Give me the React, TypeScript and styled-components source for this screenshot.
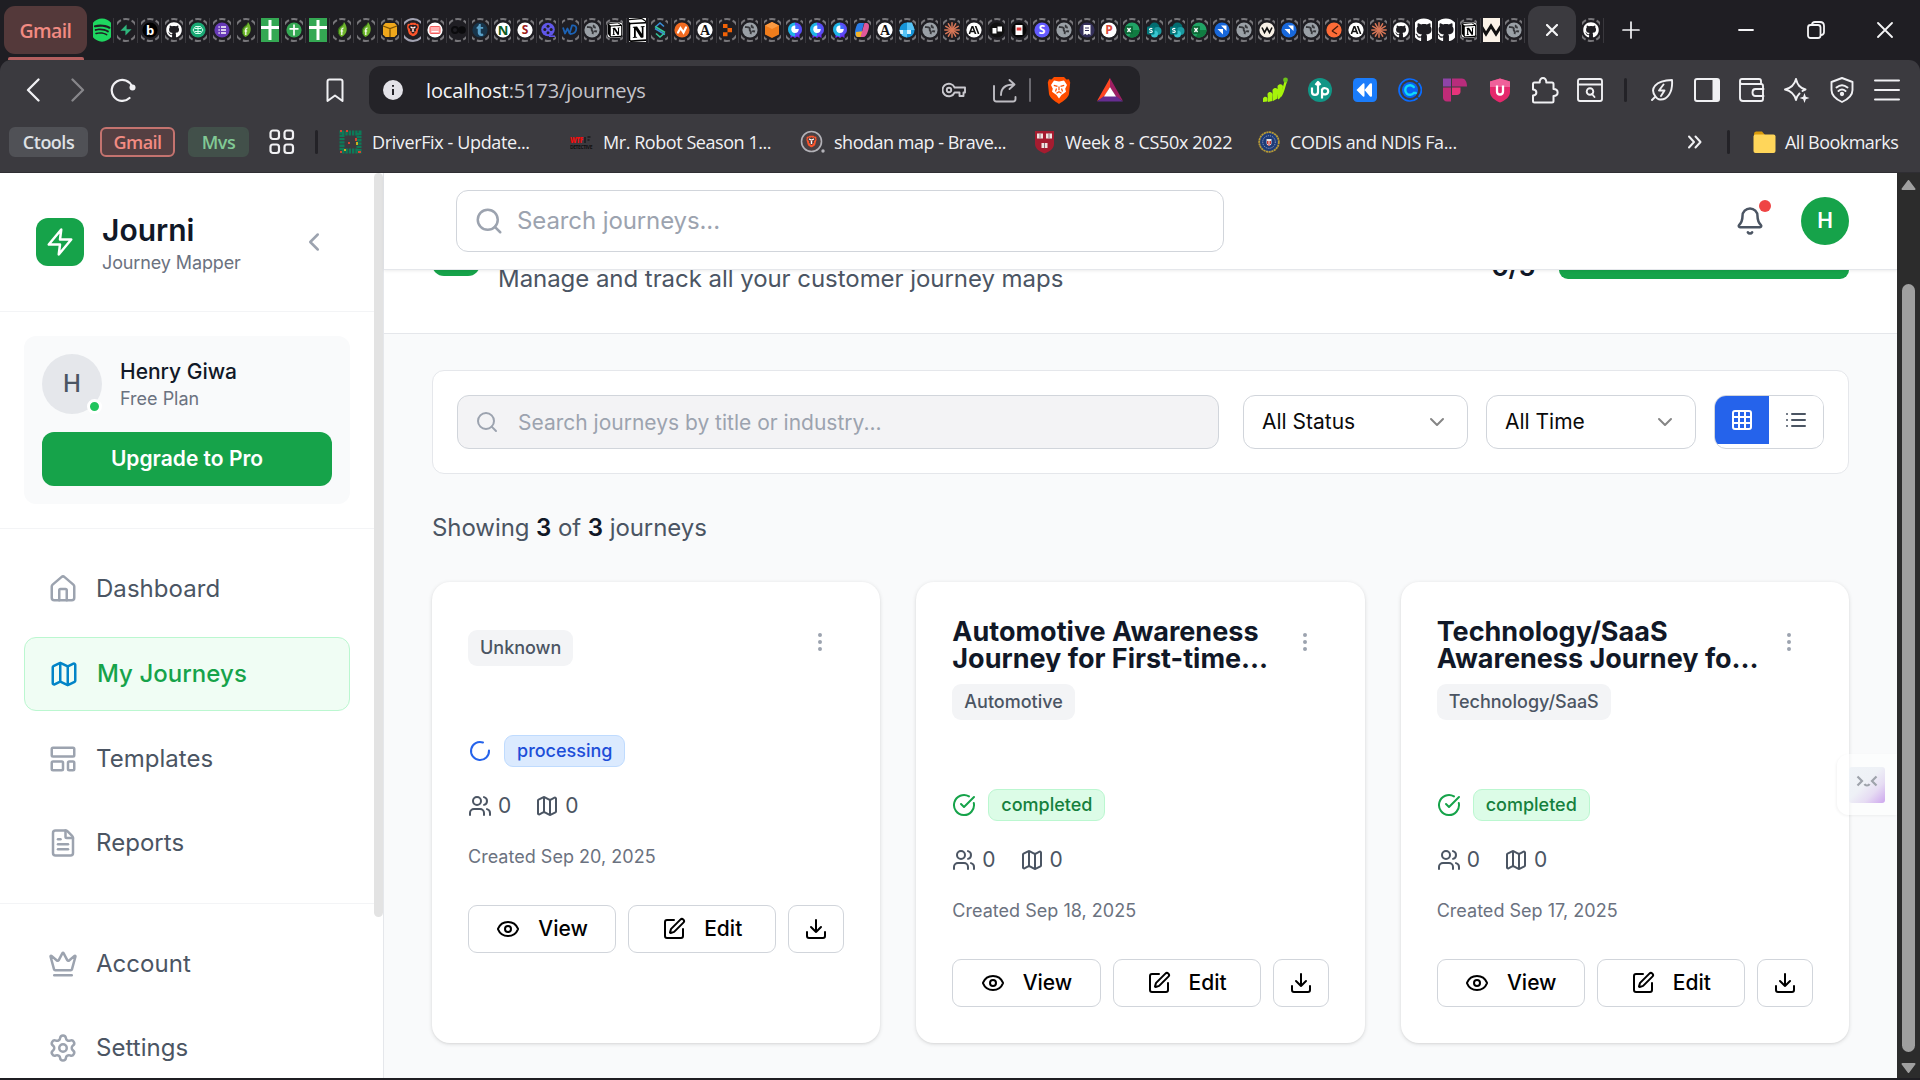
import React from "react";
import styled, { createGlobalStyle, css } from "styled-components";
import {
  House, Map as MapIcon, LayoutTemplate, FileText, Crown, Settings, ChevronLeft, ChevronDown, Search, Bell,
  Grid3x3, EllipsisVertical, CircleCheckBig, Users, Eye, SquarePen,
} from "lucide-react";
import { FaSpotify, FaGithub } from "react-icons/fa";
import { SiBrave, SiNotion, SiAnthropic, SiTumblr } from "react-icons/si";

const Global = createGlobalStyle`
  *, *::before, *::after { box-sizing: border-box; }
  body { margin: 0; background: #1f1e23; overflow: hidden; }
  button { font: inherit; margin: 0; padding: 0; border: 0; background: none; color: inherit; }
  p, h1, h2, h3 { margin: 0; font-weight: inherit; }
  svg { display: block; flex-shrink: 0; }
`;

const chromeFont = `"Open Sans", "Noto Sans", sans-serif`;
const appFont = `Inter, "Liberation Sans", sans-serif`;

/* ---------- window chrome ---------- */

const Screen = styled.div`
  width: 1920px;
  height: 1080px;
  display: flex;
  flex-direction: column;
  overflow: hidden;
  background: #1f1e23;
  font-family: ${chromeFont};
`;

const TabStrip = styled.div`
  height: 60px;
  flex-shrink: 0;
  display: flex;
  align-items: center;
  background: #1f1e23;
  color: #f4f4f6;
`;

const GroupTab = styled.div`
  width: 90px;
  height: 60px;
  padding: 6px 0 0 4px;
  display: flex;
  flex-direction: column;
  align-items: flex-start;
`;

const GroupLabel = styled.div`
  width: 83px;
  height: 48px;
  border-radius: 11px;
  background: #54393a;
  color: #f28b82;
  display: flex;
  align-items: center;
  justify-content: center;
  font-size: 19.5px;
  font-weight: 600;
  letter-spacing: -0.6px;
`;

const GroupLine = styled.div`
  width: 76px;
  height: 3px;
  margin: 3px 0 0 4px;
  border-radius: 2px 2px 0 0;
  background: #b4605f;
`;

const FavCell = styled.div<{ $w: number }>`
  width: ${(p) => p.$w}px;
  height: 25px;
  flex-shrink: 0;
  display: flex;
  align-items: center;
  justify-content: center;
  border-right: 1px solid #39383d;
`;

const FavClip = styled.div<{ $w: number }>`
  width: ${(p) => p.$w}px;
  height: 24px;
  display: flex;
  align-items: center;
  justify-content: center;
  overflow: hidden;
`;

const ActiveTab = styled.div`
  width: 48px;
  height: 48px;
  margin: 0 2px 0 3px;
  border-radius: 12px;
  background: #3b3a3f;
  display: flex;
  align-items: center;
  justify-content: center;
`;

const NewTab = styled.div`
  margin-left: 18px;
`;

const WindowButtons = styled.div`
  margin-left: auto;
  display: flex;
  height: 60px;
`;

const WindowButton = styled.div`
  width: 69.5px;
  display: flex;
  align-items: center;
  justify-content: center;
`;

const Toolbars = styled.div`
  height: 113px;
  flex-shrink: 0;
  background: #3b3a3f;
  border-radius: 11px 11px 0 0;
  border-bottom: 1px solid #2f2e33;
  display: flex;
  flex-direction: column;
`;

const NavRow = styled.div`
  height: 60px;
  display: flex;
  align-items: center;
  color: #f0f0f3;
`;

const NavIcons = styled.div`
  width: 369px;
  padding: 0 25px 0 26px;
  display: flex;
  align-items: center;
`;

const NavIcon = styled.div<{ $ml?: string; $dim?: boolean }>`
  margin-left: ${(p) => p.$ml ?? "0"};
  opacity: ${(p) => (p.$dim ? 0.42 : 1)};
`;

const UrlBox = styled.div`
  width: 771px;
  height: 48px;
  border-radius: 12px;
  background: #242328;
  display: flex;
  align-items: center;
  padding: 0 17px 0 14px;
`;

const UrlText = styled.div`
  margin-left: 23px;
  font-size: 20px;
  letter-spacing: -0.13px;
  color: #c4c4ca;
  span { color: #f4f4f6; }
`;

const UrlActions = styled.div`
  margin-left: auto;
  display: flex;
  align-items: center;
`;

const VLine = styled.div<{ $m: string; $c?: string; $w?: number }>`
  width: ${(p) => p.$w ?? 3}px;
  height: 24px;
  border-radius: 2px;
  margin: ${(p) => p.$m};
  background: ${(p) => p.$c ?? "#232227"};
`;

const ExtRow = styled.div`
  display: flex;
  align-items: center;
`;

const ExtCell = styled.div`
  width: 45px;
  display: flex;
  align-items: center;
  justify-content: center;
`;

const BookmarkRow = styled.div`
  height: 44px;
  display: flex;
  align-items: center;
  padding-left: 9px;
  color: #f1f1f4;
  font-size: 18px;
  letter-spacing: -0.38px;
  white-space: nowrap;
`;

const Pill = styled.div<{ $w: number; $bg: string; $fg: string; $line?: string; $ml?: number }>`
  width: ${(p) => p.$w}px;
  height: 30px;
  margin-left: ${(p) => p.$ml ?? 0}px;
  border-radius: 6px;
  border: 2px solid ${(p) => p.$line ?? p.$bg};
  background: ${(p) => p.$bg};
  color: ${(p) => p.$fg};
  font-weight: 600;
  letter-spacing: -0.5px;
  display: flex;
  align-items: center;
  justify-content: center;
`;

const Bookmark = styled.div<{ $w: number; $icon: number; $ls?: number }>`
  width: ${(p) => p.$w}px;
  display: grid;
  grid-template-columns: ${(p) => p.$icon}px auto;
  justify-content: start;
  align-items: center;
  letter-spacing: ${(p) => p.$ls ?? -0.38}px;
`;

/* ---------- page ---------- */

const Viewport = styled.div`
  height: 905px;
  flex-shrink: 0;
  display: flex;
  overflow: hidden;
  background: #f9fafb;
  font-family: ${appFont};
  color: #111827;
`;

const Sidebar = styled.aside`
  width: 384px;
  flex-shrink: 0;
  display: flex;
  background: #fff;
  border-right: 1px solid #e5e7eb;
  overflow: hidden;
`;

const SideBody = styled.div`
  width: 374px;
  display: flex;
  flex-direction: column;
`;

const SideScroll = styled.div`
  width: 9px;
  height: 744px;
  border-radius: 5px;
  background: #e3e3e3;
`;

const Brand = styled.div`
  height: 139px;
  flex-shrink: 0;
  display: flex;
  align-items: center;
  padding: 0 45px 0 36px;
  border-bottom: 1px solid #f3f4f6;
`;

const BrandMark = styled.div`
  width: 48px;
  height: 48px;
  border-radius: 12px;
  background: #16a34a;
  display: flex;
  align-items: center;
  justify-content: center;
`;

const BrandText = styled.div`
  margin: 0 auto 0 18px;
  h1 { font-size: 30px; line-height: 42px; font-weight: 600; }
  p { font-size: 18px; line-height: 24px; letter-spacing: -0.12px; color: #6b7280; }
`;

const Account = styled.div`
  height: 217px;
  flex-shrink: 0;
  padding: 24px;
  border-bottom: 1px solid #f3f4f6;
`;

const AccountCard = styled.div`
  height: 168px;
  width: 326px;
  padding: 18px;
  border-radius: 12px;
  background: #f9fafb;
`;

const AccountRow = styled.div`
  display: flex;
  align-items: center;
  gap: 18px;
`;

const Avatar = styled.div`
  position: relative;
  width: 60px;
  height: 60px;
  border-radius: 50%;
  background: #e5e7eb;
  color: #4b5563;
  font-size: 24px;
  line-height: 36px;
  font-weight: 500;
  display: flex;
  align-items: center;
  justify-content: center;
`;

const Presence = styled.i`
  position: absolute;
  right: 0;
  bottom: 0;
  width: 15px;
  height: 15px;
  border-radius: 50%;
  background: #22c55e;
  border: 3px solid #fff;
`;

const AccountText = styled.div`
  h3 { font-size: 21px; line-height: 30px; font-weight: 500; }
  p { font-size: 18px; line-height: 24px; color: #6b7280; }
`;

const Upgrade = styled.button`
  width: 290px;
  height: 54px;
  margin-top: 18px;
  border-radius: 12px;
  background: #16a34a;
  color: #fff;
  font-size: 21px;
  line-height: 30px;
  font-weight: 600;
`;

const NavGroup = styled.nav<{ $last?: boolean }>`
  padding: 24px;
  display: flex;
  flex-direction: column;
  gap: 12px;
  flex-shrink: 0;
  ${(p) => !p.$last && css`border-bottom: 1px solid #f3f4f6;`}
`;

const NavItem = styled.a<{ $active?: boolean }>`
  width: 326px;
  height: 72px;
  padding: 0 24px;
  display: flex;
  align-items: center;
  gap: 18px;
  font-size: 24px;
  line-height: 36px;
  letter-spacing: 0.04px;
  color: #4b5563;
  svg { color: #9ca3af; }
  ${(p) =>
    p.$active &&
    css`
      height: 74px;
      border: 1px solid #bbf7d0;
      border-radius: 12px;
      background: #f0fdf4;
      color: #16a34a;
      font-weight: 500;
      svg { color: #0284c7; }
    `}
`;

const Main = styled.main`
  width: 1513px;
  flex-shrink: 0;
  display: flex;
  flex-direction: column;
`;

const TopBar = styled.header`
  height: 97px;
  flex-shrink: 0;
  padding: 0 48px 0 72px;
  display: flex;
  align-items: center;
  background: #fff;
  border-bottom: 1px solid #e5e7eb;
  box-shadow: 0 1px 3px rgba(0, 0, 0, 0.08);
  z-index: 1;
`;

const GlobalSearch = styled.div`
  width: 768px;
  height: 62px;
  padding: 0 17px;
  display: flex;
  align-items: center;
  gap: 13px;
  border: 1px solid #d1d5db;
  border-radius: 12px;
  color: #9ca3af;
  font-size: 24px;
  line-height: 36px;
  letter-spacing: -0.1px;
`;

const BellBox = styled.div`
  position: relative;
  margin-left: auto;
  color: #4b5563;
`;

const BellDot = styled.i`
  position: absolute;
  left: 24px;
  top: -6px;
  width: 12px;
  height: 12px;
  border-radius: 50%;
  background: #ef4444;
`;

const Me = styled.div`
  width: 48px;
  height: 48px;
  margin-left: 36px;
  border-radius: 50%;
  background: #16a34a;
  color: #fff;
  font-size: 21px;
  line-height: 30px;
  font-weight: 600;
  display: flex;
  align-items: center;
  justify-content: center;
`;

const PageHead = styled.section`
  height: 64px;
  flex-shrink: 0;
  overflow: hidden;
  background: #fff;
  border-bottom: 1px solid #e5e7eb;
`;

const PageHeadRow = styled.div`
  height: 90px;
  margin-top: -63px;
  padding: 0 48px;
  display: flex;
  align-items: center;
`;

const PageMark = styled.div`
  width: 48px;
  height: 48px;
  border-radius: 12px;
  background: #16a34a;
`;

const PageLead = styled.p`
  padding-top: 54px;
  margin: 0 auto 0 18px !important;
  font-size: 24px;
  line-height: 36px;
  letter-spacing: -0.05px;
  color: #4b5563;
`;

const Quota = styled.div`
  padding-top: 30px;
  font-size: 27px;
  line-height: 36px;
  font-weight: 600;
  letter-spacing: -0.4px;
`;

const NewJourney = styled.div`
  width: 290px;
  height: 54px;
  margin-left: 24px;
  border-radius: 9px;
  background: #16a34a;
`;

const Content = styled.section`
  padding: 36px 48px 0;
`;

const Filters = styled.div`
  height: 104px;
  padding: 0 24px;
  display: flex;
  align-items: center;
  border: 1px solid #e5e7eb;
  border-radius: 12px;
  background: #fff;
  font-size: 21px;
  line-height: 30px;
`;

const FilterSearch = styled.div`
  width: 762px;
  height: 54px;
  padding: 0 17px;
  display: flex;
  align-items: center;
  gap: 19px;
  border: 1px solid #d1d5db;
  border-radius: 12px;
  background: #f3f3f5;
  color: #9ca3af;
  line-height: normal;
`;

const Select = styled.div<{ $w: number; $ml: number }>`
  width: ${(p) => p.$w}px;
  height: 54px;
  margin-left: ${(p) => p.$ml}px;
  padding: 0 18px;
  display: flex;
  align-items: center;
  justify-content: space-between;
  border: 1px solid #d1d5db;
  border-radius: 12px;
  color: #0a0a0a;
  svg { color: #858585; }
`;

const Toggle = styled.div`
  width: 110px;
  height: 54px;
  margin-left: 18px;
  display: flex;
  align-items: flex-start;
  border: 1px solid #d1d5db;
  border-radius: 12px;
  overflow: hidden;
`;

const ToggleHalf = styled.div<{ $on?: boolean }>`
  width: 54px;
  height: 48px;
  display: flex;
  align-items: center;
  justify-content: center;
  background: ${(p) => (p.$on ? "#2563eb" : "#fff")};
  color: ${(p) => (p.$on ? "#fff" : "#4b5563")};
`;

const Summary = styled.p`
  margin-top: 36px !important;
  font-size: 24px;
  line-height: 36px;
  letter-spacing: -0.07px;
  color: #4b5563;
  b { font-weight: 600; color: #111827; }
`;

const Cards = styled.div`
  margin-top: 36px;
  display: grid;
  grid-template-columns: repeat(3, 1fr);
  gap: 36px;
`;

const Card = styled.article`
  height: 461px;
  padding: 36px;
  display: flex;
  flex-direction: column;
  border-radius: 18px;
  background: #fff;
  box-shadow: 0 1px 4px rgba(0, 0, 0, 0.13), 0 1px 2px rgba(0, 0, 0, 0.04);
`;

const CardHead = styled.div`
  display: flex;
  justify-content: space-between;
  align-items: flex-start;
`;

const CardTitle = styled.h2`
  font-size: 27px;
  line-height: 27px;
  font-weight: 700;
  white-space: pre-line;
  overflow: hidden;
`;

const MenuDots = styled.div`
  margin: 12px 12px 0 0;
  color: #9ca3af;
`;

const Industry = styled.span`
  display: inline-flex;
  align-items: center;
  height: 36px;
  margin-top: 12px;
  padding: 0 12px;
  border-radius: 9px;
  background: #f3f4f6;
  color: #4b5563;
  font-size: 18px;
  line-height: 24px;
  font-weight: 500;
`;

const StatusRow = styled.div<{ $done: boolean }>`
  margin-top: 69px;
  height: 32px;
  display: flex;
  align-items: center;
  gap: 12px;
  color: ${(p) => (p.$done ? "#16a34a" : "#2563eb")};
`;

const StatusBadge = styled.span<{ $done: boolean }>`
  height: 32px;
  padding: 0 12px 1px;
  display: flex;
  align-items: center;
  border-radius: 9px;
  font-size: 18px;
  line-height: 24px;
  font-weight: 500;
  border: 1px solid ${(p) => (p.$done ? "#bbf7d0" : "#bfdbfe")};
  background: ${(p) => (p.$done ? "#dcfce7" : "#dbeafe")};
  color: ${(p) => (p.$done ? "#15803d" : "#1d4ed8")};
`;

const Stats = styled.div`
  margin-top: 24px;
  height: 30px;
  display: flex;
  align-items: center;
  gap: 24px;
  font-size: 21px;
  line-height: 30px;
  color: #4b5563;
`;

const Stat = styled.span`
  display: flex;
  align-items: center;
  gap: 6px;
`;

const Created = styled.p`
  margin-top: 22px !important;
  font-size: 18px;
  line-height: 27px;
  letter-spacing: 0.02px;
  color: #6b7280;
`;

const Actions = styled.div`
  margin-top: 35px;
  display: flex;
  gap: 12px;
`;

const Action = styled.button<{ $icon?: boolean }>`
  height: 48px;
  ${(p) => (p.$icon ? css`width: 56px;` : css`flex: 1;`)}
  display: flex;
  align-items: center;
  justify-content: center;
  gap: 18px;
  border: 1px solid #d1d5db;
  border-radius: 9px;
  color: #000;
  font-size: 21px;
  line-height: 30px;
  font-weight: 500;
`;

const PageScroll = styled.div`
  width: 23px;
  height: 905px;
  padding: 7px 0 5px;
  display: flex;
  flex-direction: column;
  align-items: center;
  background: #2c2c2c;
`;

const PageThumb = styled.div`
  width: 13px;
  height: 768px;
  margin: 94px 0 auto;
  border-radius: 7px;
  background: #9f9f9f;
`;

/* Assistant handle that hovers over the right edge of the page */
const Assistant = styled.div`
  position: absolute;
  left: 1837px;
  top: 754px;
  width: 60px;
  height: 61px;
  padding: 13px 12px;
  border-radius: 12px 0 0 12px;
  background: rgba(255, 255, 255, 0.5);
  box-shadow: -1px 1px 3px rgba(0, 0, 0, 0.05);
  z-index: 2;
`;

const AssistantFace = styled.div`
  width: 36px;
  height: 36px;
  display: flex;
  justify-content: center;
  padding-top: 7px;
  border-radius: 3px;
  background: linear-gradient(135deg, #eff3f7 0%, #eef1f6 45%, #e6dcf3 70%, #cda6ee 100%);
`;

/* ---------- favicons ---------- */

const Ring = () => (
  <circle cx="12" cy="12" r="11" fill="none" stroke="#77767a" strokeWidth="2" strokeDasharray="6.2 2.440" strokeDashoffset="3.1" />
);

function Disc({ bg, fg = "#fff", ch, size = 11, serif }: { bg: string; fg?: string; ch?: string; size?: number; serif?: boolean }) {
  return (
    <>
      <circle cx="12" cy="12" r="7.6" fill={bg} />
      {ch && (
        <text x="12" y={12 + size * 0.36} fontSize={size} fontWeight="700" textAnchor="middle" fill={fg}
          fontFamily={serif ? "Liberation Serif, serif" : "Open Sans, sans-serif"}>{ch}</text>
      )}
    </>
  );
}

const Burst = () => (
  <g stroke="#d97757" strokeWidth="1.5" strokeLinecap="round">
    {[0, 30, 60, 90, 120, 150].map((a) => (
      <line key={a} x1="12" y1="4.8" x2="12" y2="19.2" transform={`rotate(${a} 12 12)`} />
    ))}
  </g>
);

const drawings: Record<string, () => React.ReactElement> = {
  supabase: () => <path d="M12.6 6.500v4.700h5L11.400 17.500v-4.700h-5z" fill="#2fb57c" />,
  b: () => <Disc bg="#000" ch="b" size={13} />,
  github: () => <FaGithub x="4" y="4" size={16} color="#fff" />,
  chat: () => (<><Disc bg="#19a974" /><path d="M9.500 8.500h5l2.500 3.500-2.500 3.500h-5L7 12zM9 10.500h6M9 13.500h6M12 8.500v7" stroke="#d9fff0" strokeWidth="1" fill="none" /></>),
  forms: () => (<><Disc bg="#673ab7" /><path d="M8.5 9h1.2M11 9h5M8.5 12h1.2M11 12h5M8.5 15h1.2M11 15h5" stroke="#fff" strokeWidth="1.5" /></>),
  leaf: () => (<><path d="M14 4c4 5 4 12-2.500 15-4-2.500-4.500-7-1.500-10 1.500-1.500 3.500-2.500 4-5z" fill="#6fb52c" /><path d="M14 4c0 4-3 4-4.500 7s0 6 2 8c-4-2.500-5-7-2-10 1.500-1.500 4.500-2.500 4.500-5z" fill="#2f6b16" /><path d="M11.800 17v-5.500c0-1 .7-1.500 1.700-1.400M10.500 13h2.700" stroke="#fff" strokeWidth="1.200" fill="none" /></>),
  cross: () => (<><Disc bg="#34a853" /><path d="M12 6.500v11M7.500 10.800h9" stroke="#fff" strokeWidth="1.700" /></>),
  box: () => (<><path d="M5 7.500l2.500-2.500h9L19 7.500v9L16.500 19h-9L5 16.500z" fill="#f0a81c" /><path d="M5 8l7 2.500L19 8M12 10.500V19" stroke="#7a5205" strokeWidth="1.300" fill="none" /></>),
  brave: () => (<><circle cx="12" cy="12" r="11" fill="none" stroke="#a3a3b2" strokeWidth="2" /><SiBrave x="5" y="4.500" size={14} color="#fb542b" /><path d="M9.500 9l2.500 1 2.500-1M12 11v3" stroke="#fff" strokeWidth="1.200" fill="none" /></>),
  card: () => (<><Disc bg="#fff" /><rect x="7" y="8.500" width="10" height="7" rx="1" fill="#ffb0b0" stroke="#f45d5d" /><path d="M8.500 13.500h7" stroke="#fff" /></>),
  co: () => (<><circle cx="9" cy="12" r="3" fill="none" stroke="#0b0b0d" strokeWidth="2" /><circle cx="16" cy="12" r="3.800" fill="#0b0b0d" /></>),
  tumblr: () => (<><Disc bg="#17344a" /><SiTumblr x="6" y="6" size={12} color="#5aa0c8" /></>),
  n: () => <Disc bg="#fff" fg="#0c5c1f" ch="N" size={13} />,
  s: () => <Disc bg="#fff" fg="#9c1c1c" ch="S" size={12} />,
  reel: () => (<><circle cx="12" cy="11.500" r="6.800" fill="#6057e8" /><g fill="#1f1e23"><circle cx="12" cy="8.300" r="1.500" /><circle cx="12" cy="14.700" r="1.500" /><circle cx="8.800" cy="11.500" r="1.500" /><circle cx="15.200" cy="11.500" r="1.500" /></g><path d="M13 18.200h6" stroke="#6057e8" strokeWidth="1.600" /></>),
  wd: () => (<path d="M5 9.500l2 6 2.500-5 2 5L14 7.500c4-.5 5 2 4 5s-3 3.500-6 3.500" stroke="#1c62b4" strokeWidth="1.800" fill="none" strokeLinejoin="round" />),
  globe: () => (<><Disc bg="#9aa0a6" /><path d="M7 9c2 .3 3.500-.3 4.500.8s-.5 1.700.5 2.700 1.500 1.500.5 3.500M14 7c-1 1.500 0 2.500 1.800 2.500M14 13.500c1-.5 2-.3 3 0" stroke="#35363a" strokeWidth="1.900" fill="none" /></>),
  notion: () => (<><rect x="4.500" y="4.500" width="15" height="15" rx="3" fill="#fff" /><SiNotion x="4.500" y="4.500" size={15} color="#000" /></>),
  wave: () => (<><path d="M8 8.500L12 5l4 3.500M7 10.500l10 6" stroke="#3a8fd8" strokeWidth="1.600" fill="none" /><path d="M16 15.500L12 19l-4-3.500M7 8.500l10 6" stroke="#35c79a" strokeWidth="1.600" fill="none" /></>),
  nc: () => (<><Disc bg="#f26b21" /><path d="M8 14.500l2.500-4.500 3 4.500L16 9.500" stroke="#fff" strokeWidth="2.200" fill="none" strokeLinecap="round" /></>),
  a: () => <Disc bg="#fff" fg="#111" ch="A" size={14} serif />,
  replit: () => <path d="M8 6h4.500v4H8zM12.500 10H17v4.200h-4.500zM8 14.200h4.500v4H8z" fill="#f26207" />,
  cube: () => (<><path d="M12 4l7 3.500v9L12 20l-7-3.500v-9z" fill="#f07d1c" /><path d="M12 4l7 3.500-7 3.500-7-3.500z" fill="#fb9a42" /></>),
  pie: () => (<><path d="M7.500 14v6l2.500-1.500 2 1.500 2-1.500 2.500 1.500v-6z" fill="#6b2ff0" /><path d="M12 4.500a7 7 0 0 1 7 7c0 4-3 6-7 6.500z" fill="#5a4cf5" /><path d="M12 18.500A7 7 0 0 1 12 4.500z" fill="#1fb4e6" /><circle cx="12" cy="11.300" r="3.700" fill="#fff" /><path d="M12.300 11V7a4.200 4.200 0 0 1 4 4z" fill="#3f6dff" /></>),
  copilot: () => (<><path d="M9.500 5h4.500l-3 12c-.5 1.500-1.500 2-3 2-3.500 0-3.500-4-2.500-8C6.500 7 7.500 5 9.500 5z" fill="#2a7de8" /><path d="M6 14l9-1-1.500 5c-.5 1-1.500 1-2.500 1H8c-2 0-2.500-2-2-5z" fill="#f3b32a" /><path d="M14.500 5h2c3 0 3 4 1.500 8s-2.500 6-5 6h-2.500L13 10z" fill="#e0589a" /></>),
  diamond: () => (<><Disc bg="#1594d8" /><path d="M12 4.400h5l2.600 7.600H12zM7 12h5v7.600l-5-2.200z" fill="#57c3f5" /><path d="M4.400 12H8v4H5.500zM12 12h4v4h-4z" fill="#d6effb" /></>),
  claude: () => <Burst />,
  anthropic: () => (<><Disc bg="#fff" /><SiAnthropic x="6.500" y="6.500" size={11} color="#111" /></>),
  squares: () => (<><Disc bg="#111" /><path d="M7.500 10h4v5.500h-4zM12.500 8.500h4.500v5h-4.500z" fill="#fff" /></>),
  pdf: () => (<><Disc bg="#080808" /><rect x="8.500" y="7" width="7" height="10" fill="#fff" /><path d="M9.700 11h4.600" stroke="#e23b3b" strokeWidth="3" /></>),
  stripe: () => <Disc bg="#635bff" ch="S" size={12} />,
  doc: () => (<><Disc bg="#35315c" /><path d="M8.500 7h7v10l-1.700-1.200L12 17l-1.700-1.200L8.500 17z" fill="#fff" /><path d="M10 10h4M10 12.500h4" stroke="#35315c" strokeWidth="1" /></>),
  p: () => <Disc bg="#fff" fg="#dc4a3b" ch="P" size={12} />,
  excel: () => (<><Disc bg="#21a366" /><path d="M12 12h7.600A7.600 7.600 0 0 1 9 19z" fill="#107c41" /><rect x="5" y="8" width="8" height="8" rx="1" fill="#0d6b38" /><path d="M7.400 10l3.200 4M10.600 10l-3.200 4" stroke="#fff" strokeWidth="1.300" /></>),
  share: () => (<><circle cx="12.500" cy="9.500" r="5" fill="#036c70" /><circle cx="15.500" cy="13" r="4" fill="#1a9ba1" /><circle cx="12.500" cy="16" r="3.500" fill="#37c6d0" /><rect x="5" y="8.500" width="7.500" height="8" rx="1" fill="#03787c" /><path d="M10.300 10.800c-1-.7-2.800-.5-2.800.6s2.800.8 2.800 2-2 1.200-3 .5" stroke="#fff" strokeWidth="1.100" fill="none" /></>),
  jira: () => (<><Disc bg="#1868db" /><path d="M11 7.500h5.500V13l-2-2zM7.500 11H13v5.500l-2-2z" fill="#fff" /></>),
  w: () => (<><Disc bg="#f8f1e7" /><path d="M7 9.500l2.500 5L12 10l2.500 4.500L17 9.500" stroke="#111" strokeWidth="1.600" fill="none" /></>),
  postman: () => (<><Disc bg="#ff6c37" /><path d="M16 8l-6 5M10 13l5 3" stroke="#4c1d0c" strokeWidth="1.400" fill="none" /></>),
};

const fullDrawings: Record<string, () => React.ReactElement> = {
  spotify: () => <FaSpotify size={24} color="#1ed760" />,
  crossFull: () => (<><rect width="24" height="24" fill="#34a853" /><path d="M12 2v20M3 9.500h18" stroke="#fff" strokeWidth="3" /></>),
  notionFull: () => (<><rect width="24" height="24" rx="3" fill="#fff" /><SiNotion x="0" y="0" size={24} color="#000" /></>),
  githubFull: () => <FaGithub size={24} color="#fff" />,
  wFull: () => (<><rect width="24" height="24" fill="#fbf3e8" /><path d="M2 8l5 8 5-8 5 8 5-8" stroke="#111" strokeWidth="3" fill="none" /></>),
};

function Favicon({ kind, w }: { kind: string; w: number }) {
  const full = fullDrawings[kind];
  return (
    <FavCell $w={w}>
      <FavClip $w={w > 23 ? 18 : 17}>
        <svg width="24" height="24" viewBox="0 0 24 24">
          {full ? full() : (<>{kind !== "brave" && <Ring />}{drawings[kind]()}</>)}
        </svg>
      </FavClip>
    </FavCell>
  );
}

const pinned = "spotify supabase b github chat forms leaf crossFull cross crossFull leaf leaf box".split(" ");
const grouped = (
  "brave card co tumblr n s reel wd globe notion notionFull " +
  "wave nc a replit globe cube pie pie pie copilot a diamond globe claude anthropic squares pdf stripe globe doc p excel share share excel jira globe w " +
  "jira globe postman anthropic claude github githubFull githubFull notion wFull globe"
).split(" ");

/* ---------- chrome parts ---------- */

function Stroke({ w, h, vb, d, sw = 2, children }: { w: number; h: number; vb?: string; d?: string; sw?: number; children?: React.ReactNode }) {
  return (
    <svg width={w} height={h} viewBox={vb ?? `0 0 ${w} ${h}`} fill="none" stroke="currentColor" strokeWidth={sw} strokeLinecap="round" strokeLinejoin="round">
      {d && <path d={d} />}
      {children}
    </svg>
  );
}

const LionShield = ({ w, h }: { w: number; h: number }) => (
  <svg width={w} height={h} viewBox="0 0 24 28">
    <path d="M7 1h10l2.500 2.500L22 3.300l1.200 3.200L22 18c-.5 3.500-5.500 7-10 10C7.500 25 2.500 21.500 2 18L.8 6.500 2 3.300l2.500.2z" fill="#ff4d00" />
    <path d="M12 5.500l5-1 3 4.500-1.800 3.800.8 3-4.500 3.200-2.500 3.500-2.500-3.500L5 15.800l.8-3L4 9l3-4.500z" fill="#fff" />
    <path d="M6.800 9.300l3.700 1M17.200 9.300l-3.700 1M12 10.500v3.800M9.500 17.300l2.500-1.500 2.500 1.500M9.500 12.500l-1 3M14.500 12.500l1 3" stroke="#ff4d00" strokeWidth="1.200" fill="none" />
  </svg>
);

function Extensions() {
  return (
    <ExtRow>
      <ExtCell>
        <svg width="26" height="26" viewBox="0 0 26 26">
          <path d="M1 25v-3.500c1-2.500 4.500-2 4.500.5v2.500zM6 25l-.5-8c1-3 5-2.500 5 .5V24zM11 24l-.5-11c1.500-3 5.500-2.500 5.500.5l-.5 8zM16 22.500L15.500 9c1.500-2.500 5-2.500 5.500.5l-1 8c-1 2.500-2 4-4 5z" fill="#a6f30b" />
          <path d="M18.500 19c3-4 3.500-10 5.500-15" stroke="#a6f30b" strokeWidth="2.400" fill="none" />
          <circle cx="23.500" cy="3" r="2.400" fill="#6cc11a" />
        </svg>
      </ExtCell>
      <ExtCell>
        <svg width="24" height="24" viewBox="0 0 24 24">
          <circle cx="12" cy="12" r="12" fill="#119686" />
          <path d="M4 9.500v4.500c0 3.800 6 3.800 6 0V4.500M7.500 7L10 4l2.500 3M14 20.500V11M14 12.500c.5-3.500 6.200-2.800 6.200.8s-5.200 4.200-6.200 1" stroke="#fff" strokeWidth="2.200" fill="none" strokeLinejoin="round" />
        </svg>
      </ExtCell>
      <ExtCell>
        <svg width="24" height="24" viewBox="0 0 24 24">
          <rect width="24" height="24" rx="4.500" fill="#1a7cfb" />
          <path d="M3.500 12l6.500-6.500q1.500-1 1.500 1v11q0 2-1.500 1zM11.500 12l5.500-6.500q2-1 2 1v11q0 2-2 1z" fill="#fff" />
        </svg>
      </ExtCell>
      <ExtCell>
        <svg width="24" height="24" viewBox="0 0 24 24" fill="none" strokeLinecap="round">
          <path d="M19 3.500A11 11 0 1 0 19 20.500" stroke="#0a6cff" strokeWidth="1.700" />
          <circle cx="12" cy="12" r="8" fill="#0a62f5" />
          <path d="M21 5.500c3 4 3 9 0 13" stroke="#0a6cff" strokeWidth="1.700" />
          <path d="M15.800 9a4.800 4.800 0 1 0 0 6h2" stroke="#12d8f5" strokeWidth="2.400" />
        </svg>
      </ExtCell>
      <ExtCell>
        <svg width="24" height="24" viewBox="0 0 24 24">
          <path d="M0 .5h8v8H0z" fill="#8e44a8" />
          <path d="M9 .5h10c3 0 5 3 5 8H9z" fill="#b82c7c" />
          <path d="M0 9.500h8v14H4c-2.500 0-4-2-4-4z" fill="#c02b78" />
          <path d="M9 9.500h8.500v4c0 2-1.500 3.500-3.500 3.500H9z" fill="#e5347b" />
        </svg>
      </ExtCell>
      <ExtCell>
        <svg width="22" height="25" viewBox="0 0 22 25">
          <path d="M11 .5L21 3.500V14c0 5-5 8.500-10 10.500C6 22.500 1 19 1 14V3.500z" fill="#e5286c" />
          <path d="M11 .5L21 3.500V9H1V3.500z" fill="#f0609a" />
          <path d="M8 7.500v6c0 4 6 4 6 0v-6" stroke="#fff" strokeWidth="2.300" fill="none" />
        </svg>
      </ExtCell>
      <ExtCell>
        <Stroke w={28} h={27} sw={2} d="M3.500 5.500h5.200c-.4-6 7-6 6.600 0H21q1.500 0 1.500 1.500v5c5.500.2 5.500 6.800 0 7v5q0 1.500-1.500 1.500H3.500Q2 25.500 2 24v-5.500c4.500-.3 4.500-5.700 0-6V7q0-1.500 1.500-1.500z" />
      </ExtCell>
      <ExtCell>
        <Stroke w={26} h={24} d="M3 1h20q2 0 2 2v18q0 2-2 2H3q-2 0-2-2V3q0-2 2-2zM1 6.500h24M15 16l2.500 3" sw={1.9}><circle cx="13" cy="13.500" r="3.300" /></Stroke>
      </ExtCell>
      <VLine $m="0 12px" />
      <ExtCell>
        <Stroke w={24} h={24} sw={1.9} d="M2 22l3.500-3.500M5.500 18.500C-.5 11 5 2.500 22 2c1 12-4.500 20-12 19.500-2 0-3.500-1.500-4.500-3zM13.500 6.500L9 12.500h5.500L11 18" />
      </ExtCell>
      <ExtCell>
        <Stroke w={26} h={24} sw={2}><rect x="1" y="1" width="24" height="22" rx="2" /><path d="M18.500 1.500h6v21h-6z" fill="currentColor" stroke="none" /></Stroke>
      </ExtCell>
      <ExtCell>
        <Stroke w={26} h={24} sw={1.9} d="M22 6V3q0-2-2-2H3Q1 1 1 3v17q0 3 3 3h18q2 0 2-2V8q0-2-2-2H3Q1 6 1 3.500M24.500 11h-8q-3 0-3 3.500t3 3.500h8" />
      </ExtCell>
      <ExtCell>
        <Stroke w={26} h={25} sw={1.9} d="M12 1c1.500 6 3.500 8.500 9.500 10.500M12 1C10.500 7 7.500 10 1 11.500c6.500 1.500 9.500 4.500 11 10.500 .8-3 1.800-5 3.500-6.500M21.500 11.500q-1.500.5-3 1.500"><path d="M20.500 15l1.300 3.700 3.700 1.300-3.700 1.300-1.300 3.700-1.300-3.700-3.700-1.300 3.700-1.300z" fill="currentColor" stroke="none" /></Stroke>
      </ExtCell>
      <ExtCell>
        <Stroke w={24} h={26} sw={1.9} d="M12 1l10.500 4v8c0 6-5 9.500-10.500 12C6.500 22.500 1.500 19 1.500 13V5zM6.500 10.500c3.500-3 7.500-3 11 0M8.500 14c2.200-2 4.800-2 7 0"><circle cx="12" cy="17" r="1.200" fill="currentColor" /></Stroke>
      </ExtCell>
      <ExtCell><Stroke w={26} h={22} d="M1 1.500h24M1 11h24M1 20.500h24" /></ExtCell>
    </ExtRow>
  );
}

function Chrome() {
  return (
    <>
      <TabStrip>
        <GroupTab>
          <GroupLabel>Gmail</GroupLabel>
          <GroupLine />
        </GroupTab>
        {pinned.map((k, i) => <Favicon key={i} kind={k} w={24} />)}
        {grouped.map((k, i) => <Favicon key={i} kind={k} w={22.47} />)}
        <ActiveTab><Stroke w={12} h={12} d="M1 1l10 10M11 1L1 11" sw={2.2} /></ActiveTab>
        <Favicon kind="github" w={26} />
        <NewTab><Stroke w={18} h={18} d="M9 1v16M1 9h16" sw={1.7} /></NewTab>
        <WindowButtons>
          <WindowButton><Stroke w={16} h={4} d="M1 2h14" sw={1.8} /></WindowButton>
          <WindowButton>
            <Stroke w={18} h={18} sw={1.8} d="M5 4V3.500Q5 1 8 1h5q4 0 4 4v6q0 2.500-2.500 3"><rect x="1" y="4" width="12.500" height="13" rx="2.500" /></Stroke>
          </WindowButton>
          <WindowButton><Stroke w={16} h={16} d="M1 1l14 14M15 1L1 15" sw={1.8} /></WindowButton>
        </WindowButtons>
      </TabStrip>
      <Toolbars>
        <NavRow>
          <NavIcons>
            <NavIcon><Stroke w={14} h={24} d="M12.500 1.500L2 12l10.500 10.500" sw={2.3} /></NavIcon>
            <NavIcon $ml="31px" $dim><Stroke w={14} h={24} d="M1.500 1.500L12 12 1.500 22.500" sw={2.3} /></NavIcon>
            <NavIcon $ml="25px">
              <Stroke w={26} h={24} sw={2.2} d="M19.500 20A10.500 10.500 0 1 1 22 8.500"><circle cx="22.500" cy="9.500" r="3" fill="currentColor" stroke="none" /></Stroke>
            </NavIcon>
            <NavIcon $ml="auto"><Stroke w={18} h={25} d="M3.500 1.500h11q2 0 2 2V23L9 17.500 1.500 23V3.500q0-2 2-2z" sw={2} /></NavIcon>
          </NavIcons>
          <UrlBox>
            <svg width="20" height="20" viewBox="0 0 20 20">
              <circle cx="10" cy="10" r="10" fill="#e3e2e8" />
              <path d="M10 9v6M10 5v1.800" stroke="#242328" strokeWidth="2" />
            </svg>
            <UrlText><span>localhost</span>:5173/journeys</UrlText>
            <UrlActions>
              <svg width="24" height="16" viewBox="0 0 24 16" fill="none" stroke="#c9c8ce" strokeWidth="1.900" strokeLinejoin="round">
                <path d="M12.600 5.500H23v5h-1.500V14h-4v-3.500h-4.900A6.300 6.300 0 1 1 12.600 5.500z" />
                <circle cx="7" cy="8" r="2.200" />
              </svg>
              <NavIcon $ml="27px">
                <svg width="24" height="25" viewBox="0 0 24 25" fill="none" stroke="#bdbcc2" strokeWidth="1.900" strokeLinecap="round" strokeLinejoin="round">
                  <path d="M1 8v13q0 2.500 2.500 2.500H20q2.500 0 2.500-2.500v-2M8 17C8 9 13 6.500 21 6.500M16.500 2l5 4.500-5 4.500" />
                </svg>
              </NavIcon>
              <VLine $m="0 16px 0 12px" $c="#6b6a70" $w={2} />
              <LionShield w={24} h={28} />
              <NavIcon $ml="26px">
                <svg width="26" height="24" viewBox="0 0 26 24">
                  <path d="M13 0L0 23l7-4 6-10z" fill="#ff4724" />
                  <path d="M13 0l13 23-7-4-6-10z" fill="#9e1f63" />
                  <path d="M0 23.500h26L19 18H7z" fill="#662d91" />
                  <path d="M13 9l6 9.500H7z" fill="#fff" />
                </svg>
              </NavIcon>
            </UrlActions>
          </UrlBox>
          <NavIcon $ml="112px"><Extensions /></NavIcon>
        </NavRow>
        <BookmarkRow>
          <Pill $w={79} $bg="#505156" $fg="#dfe1e5">Ctools</Pill>
          <Pill $w={75} $bg="#543f42" $fg="#f28b82" $line="#c4736f" $ml={12}>Gmail</Pill>
          <Pill $w={61} $bg="#42504a" $fg="#81c995" $ml={13}>Mvs</Pill>
          <NavIcon $ml="20px">
            <Stroke w={26} h={26} sw={2.2}>
              <rect x="1.500" y="1.500" width="8.500" height="8.500" rx="2.500" /><rect x="15.500" y="1.500" width="8.500" height="8.500" rx="2.500" />
              <rect x="1.500" y="15.500" width="8.500" height="8.500" rx="2.500" /><rect x="15.500" y="15.500" width="8.500" height="8.500" rx="2.500" />
            </Stroke>
          </NavIcon>
          <VLine $m="0 21px 0 20px" />
          <Bookmark $w={231} $icon={33}>
            <svg width="23" height="24" viewBox="0 0 23 24">
              <path d="M3 3h17v18H3z" fill="none" stroke="#0d7a58" strokeWidth="5" strokeDasharray="2.400 .9" />
              <path d="M1 1h2M7 1h2M19 22h3M1 22h2M17 8v3M9 13h2" stroke="#d7452f" strokeWidth="2" />
              <path d="M18 12v3M5 20h2" stroke="#c8b21f" strokeWidth="2" />
            </svg>
            <span>DriverFix - Update...</span>
          </Bookmark>
          <Bookmark $w={230} $icon={33} $ls={-0.44}>
            <svg width="23" height="20" viewBox="0 0 23 20">
              <text x="0" y="11" fontSize="9" fontWeight="800" fill="#f20d0d" textLength="13" lengthAdjust="spacingAndGlyphs" fontFamily="Open Sans, sans-serif">WTF</text>
              <path d="M15 5v6M17.500 5h3M17.500 8h2" stroke="#1b1b1e" strokeWidth="1.500" />
              <text x="0" y="17" fontSize="5" fontWeight="700" fill="#111" textLength="22" lengthAdjust="spacingAndGlyphs" fontFamily="Open Sans, sans-serif">DETECTIVE</text>
            </svg>
            <span>Mr. Robot Season 1...</span>
          </Bookmark>
          <Bookmark $w={235} $icon={34} $ls={-0.49}>
            <svg width="25" height="24" viewBox="0 0 25 24">
              <circle cx="11.500" cy="11.500" r="10" fill="#4a4043" stroke="#b3b2b8" strokeWidth="1.600" />
              <SiBrave x="5.500" y="5.500" size={12} color="#fb542b" />
              <path d="M9 9l2.500 1L14 9M11.500 11v3" stroke="#fff" strokeWidth="1.300" fill="none" />
              <circle cx="23" cy="21" r="1.700" fill="#b3b2b8" />
            </svg>
            <span>shodan map - Brave...</span>
          </Bookmark>
          <Bookmark $w={223} $icon={30} $ls={-0.33}>
            <svg width="19" height="24" viewBox="0 0 19 24">
              <path d="M0 1h19v13c0 5-5 7.500-9.500 9.500C5 21.500 0 19 0 14z" fill="#a51c30" />
              <path d="M2 3.500h6v5H2zM11 3.500h6v5h-6zM6.500 13h6v5h-6z" fill="#f1e3e0" />
              <path d="M5 3.500v5M14 3.500v5M9.500 13v5" stroke="#86707a" />
            </svg>
            <span>Week 8 - CS50x 2022</span>
          </Bookmark>
          <Bookmark $w={230} $icon={32}>
            <svg width="22" height="22" viewBox="0 0 22 22">
              <circle cx="11" cy="11" r="9.800" fill="#1d3b78" stroke="#b89a35" strokeWidth="1.800" strokeDasharray="2.200 .5" />
              <circle cx="11" cy="11" r="6.300" fill="none" stroke="#a9aec8" strokeWidth="1" strokeDasharray="1 1" />
              <path d="M8.500 8h5v4c0 2-1.500 2.500-2.500 3-1-.5-2.500-1-2.500-3z" fill="#e8e4e0" /><path d="M11 10v5M9.500 10v3M12.500 10v3" stroke="#c33" />
            </svg>
            <span>CODIS and NDIS Fa...</span>
          </Bookmark>
          <NavIcon $ml="199px"><Stroke w={15} h={14} d="M2 1.500L7 7l-5 5.500M8.500 1.500l5 5.500-5 5.500" sw={2} /></NavIcon>
          <VLine $m="0 23px 0 25px" />
          <Bookmark $w={160} $icon={32} $ls={-0.52}>
            <svg width="23" height="24" viewBox="0 0 23 24">
              <path d="M1 4q0-2.500 2-2.500h6L12 5h9v6H1z" fill="#d99a0b" />
              <rect x=".5" y="4.500" width="22" height="18.500" rx="2" fill="#ffd65a" />
            </svg>
            <span>All Bookmarks</span>
          </Bookmark>
        </BookmarkRow>
      </Toolbars>
    </>
  );
}

/* ---------- page parts ---------- */

const Bolt = () => (
  <svg width="30" height="30" viewBox="0 0 24 24" fill="none" stroke="#fff" strokeWidth="2" strokeLinecap="round" strokeLinejoin="round">
    <polygon points="13 2 3 14 12 14 11 22 21 10 12 10 13 2" />
  </svg>
);

const Spinner = () => (
  <svg width="24" height="24" viewBox="0 0 24 24" fill="none" stroke="currentColor" strokeWidth="2" strokeLinecap="round">
    <path d="M15 3.500A9 9 0 1 0 21 11.500" />
  </svg>
);

const DownloadIcon = () => (
  <svg width="24" height="24" viewBox="0 0 24 24" fill="none" stroke="currentColor" strokeWidth="2" strokeLinecap="round" strokeLinejoin="round">
    <path d="M21 15v4a2 2 0 0 1-2 2H5a2 2 0 0 1-2-2v-4M7 10l5 5 5-5M12 15V3" />
  </svg>
);

const ListIcon = () => (
  <svg width="24" height="24" viewBox="0 0 24 24" fill="none" stroke="currentColor" strokeWidth="2" strokeLinecap="round">
    <path d="M8 6h13M8 12h13M8 18h13M3 6h.01M3 12h.01M3 18h.01" />
  </svg>
);

interface Journey { title: string; industry: string; status: "processing" | "completed"; created: string }

const journeys: Journey[] = [
  { title: "", industry: "Unknown", status: "processing", created: "Sep 20, 2025" },
  { title: "Automotive Awareness\nJourney for First-time…", industry: "Automotive", status: "completed", created: "Sep 18, 2025" },
  { title: "Technology/SaaS\nAwareness Journey fo…", industry: "Technology/SaaS", status: "completed", created: "Sep 17, 2025" },
];

function JourneyCard({ j }: { j: Journey }) {
  const done = j.status === "completed";
  return (
    <Card>
      <CardHead>
        <div>
          <CardTitle>{j.title}</CardTitle>
          <Industry>{j.industry}</Industry>
        </div>
        <MenuDots><EllipsisVertical size={24} /></MenuDots>
      </CardHead>
      <StatusRow $done={done}>
        {done ? <CircleCheckBig size={24} /> : <Spinner />}
        <StatusBadge $done={done}>{j.status}</StatusBadge>
      </StatusRow>
      <Stats>
        <Stat><Users size={24} />0</Stat>
        <Stat><MapIcon size={24} />0</Stat>
      </Stats>
      <Created>Created {j.created}</Created>
      <Actions>
        <Action><Eye size={24} />View</Action>
        <Action><SquarePen size={24} />Edit</Action>
        <Action $icon><DownloadIcon /></Action>
      </Actions>
    </Card>
  );
}

export default function App() {
  return (
    <Screen>
      <Global />
      <Chrome />
      <Viewport>
        <Sidebar>
          <SideBody>
            <Brand>
              <BrandMark><Bolt /></BrandMark>
              <BrandText><h1>Journi</h1><p>Journey Mapper</p></BrandText>
              <ChevronLeft size={30} color="#9ca3af" />
            </Brand>
            <Account>
              <AccountCard>
                <AccountRow>
                  <Avatar>H<Presence /></Avatar>
                  <AccountText><h3>Henry Giwa</h3><p>Free Plan</p></AccountText>
                </AccountRow>
                <Upgrade>Upgrade to Pro</Upgrade>
              </AccountCard>
            </Account>
            <NavGroup>
              <NavItem><House size={30} />Dashboard</NavItem>
              <NavItem $active><MapIcon size={30} />My Journeys</NavItem>
              <NavItem><LayoutTemplate size={30} />Templates</NavItem>
              <NavItem><FileText size={30} />Reports</NavItem>
            </NavGroup>
            <NavGroup $last>
              <NavItem><Crown size={30} />Account</NavItem>
              <NavItem><Settings size={30} />Settings</NavItem>
            </NavGroup>
          </SideBody>
          <SideScroll />
        </Sidebar>
        <Main>
          <TopBar>
            <GlobalSearch><Search size={30} />Search journeys...</GlobalSearch>
            <BellBox><Bell size={30} /><BellDot /></BellBox>
            <Me>H</Me>
          </TopBar>
          <PageHead>
            <PageHeadRow>
              <PageMark />
              <PageLead>Manage and track all your customer journey maps</PageLead>
              <Quota>0/5</Quota>
              <NewJourney />
            </PageHeadRow>
          </PageHead>
          <Content>
            <Filters>
              <FilterSearch><Search size={24} />Search journeys by title or industry...</FilterSearch>
              <Select $w={225} $ml={24}>All Status<ChevronDown size={24} /></Select>
              <Select $w={210} $ml={18}>All Time<ChevronDown size={24} /></Select>
              <Toggle>
                <ToggleHalf $on><Grid3x3 size={24} /></ToggleHalf>
                <ToggleHalf><ListIcon /></ToggleHalf>
              </Toggle>
            </Filters>
            <Summary>Showing <b>3</b> of <b>3</b> journeys</Summary>
            <Cards>{journeys.map((j) => <JourneyCard key={j.industry} j={j} />)}</Cards>
          </Content>
        </Main>
        <PageScroll>
          <svg width="15" height="10" viewBox="0 0 15 10"><path d="M7.500 1l6 8h-12z" fill="#9f9f9f" stroke="#9f9f9f" strokeWidth="2" strokeLinejoin="round" /></svg>
          <PageThumb />
          <svg width="15" height="10" viewBox="0 0 15 10"><path d="M7.500 9l6-8h-12z" fill="#9f9f9f" stroke="#9f9f9f" strokeWidth="2" strokeLinejoin="round" /></svg>
        </PageScroll>
      </Viewport>
      <Assistant>
        <AssistantFace>
          <svg width="22" height="14" viewBox="0 0 22 14" fill="none" stroke="#9ea3ab" strokeWidth="2.200">
            <path d="M1.500 2.500L6 7l-4.500 4.500M20.500 2.500L16 7l4.500 4.500M8.500 10c1 2 4 2 5 0" />
          </svg>
        </AssistantFace>
      </Assistant>
    </Screen>
  );
}
